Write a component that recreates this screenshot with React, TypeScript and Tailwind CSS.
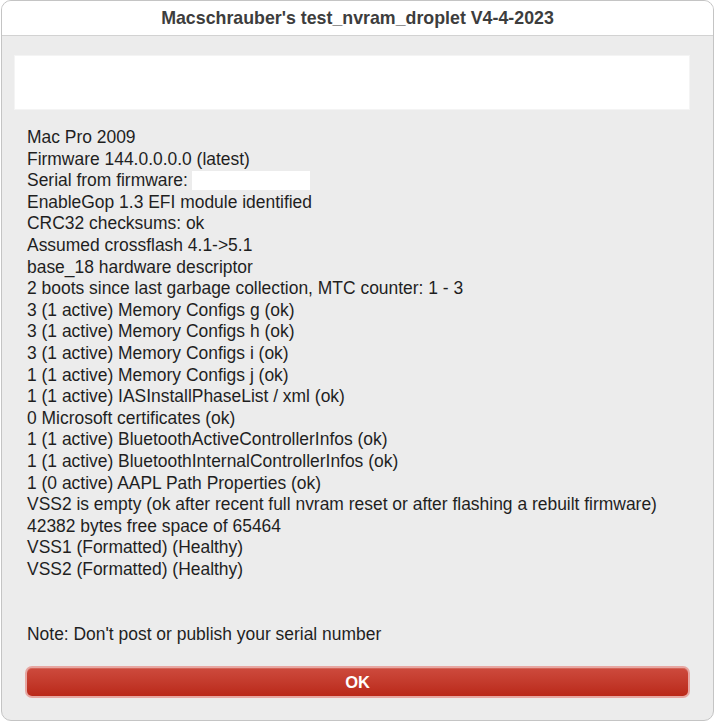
import React from "react";

const lines: (string | null)[] = [
  "Mac Pro 2009",
  "Firmware 144.0.0.0.0 (latest)",
  "SERIAL",
  "EnableGop 1.3 EFI module identified",
  "CRC32 checksums: ok",
  "Assumed crossflash 4.1->5.1",
  "base_18 hardware descriptor",
  "2 boots since last garbage collection, MTC counter: 1 - 3",
  "3 (1 active) Memory Configs g (ok)",
  "3 (1 active) Memory Configs h (ok)",
  "3 (1 active) Memory Configs i (ok)",
  "1 (1 active) Memory Configs j (ok)",
  "1 (1 active) IASInstallPhaseList / xml (ok)",
  "0 Microsoft certificates (ok)",
  "1 (1 active) BluetoothActiveControllerInfos (ok)",
  "1 (1 active) BluetoothInternalControllerInfos (ok)",
  "1 (0 active) AAPL Path Properties (ok)",
  "VSS2 is empty (ok after recent full nvram reset or after flashing a rebuilt firmware)",
  "42382 bytes free space of 65464",
  "VSS1 (Formatted) (Healthy)",
  "VSS2 (Formatted) (Healthy)",
  null,
  null,
  "Note: Don't post or publish your serial number",
];

export default function App() {
  return (
    <div
      className="w-[716px] h-[721px] bg-white"
      style={{ fontFamily: '"Liberation Sans", Arial, sans-serif' }}
    >
      <div className="ml-[1px] w-[713px] h-[721px] rounded-[10px] border border-[#c4c4c4] bg-[#ececec] overflow-hidden flex flex-col">
        <div className="h-[35px] shrink-0 bg-white border-b border-[#d2d2d2] flex items-center justify-center">
          <span className="text-[17.8px] font-bold text-[#3d3d3d]">
            Macschrauber's test_nvram_droplet V4-4-2023
          </span>
        </div>
        <div className="pl-[12px] pr-[23px] pt-[19px]">
          <div className="h-[55px] bg-white border border-[#f4f4f4]" />
        </div>
        <div className="pl-[25px] pt-[17px] text-[17.45px] leading-[21.6px] text-[#1f1f1f]">
          {lines.map((l, i) =>
            l === null ? (
              <div key={i} className="h-[21.6px]" />
            ) : l === "SERIAL" ? (
              <div key={i} className="flex items-center">
                <span>Serial from firmware:</span>
                <span className="ml-[4px] inline-block w-[118px] h-[19px] bg-white" />
              </div>
            ) : (
              <div key={i} className="whitespace-nowrap">
                {l}
              </div>
            )
          )}
        </div>
        <div className="px-[23px] pt-[21px]">
          <div className="rounded-[7px] bg-[#e7a7a2] p-[2px]">
            <div className="h-[28px] rounded-[5px] bg-gradient-to-b from-[#cd4a3d] to-[#ba2818] flex items-center justify-center shadow-[inset_0_1px_0_rgba(255,255,255,0.15)]">
              <span className="text-white text-[16.5px] font-semibold">OK</span>
            </div>
          </div>
        </div>
      </div>
    </div>
  );
}
